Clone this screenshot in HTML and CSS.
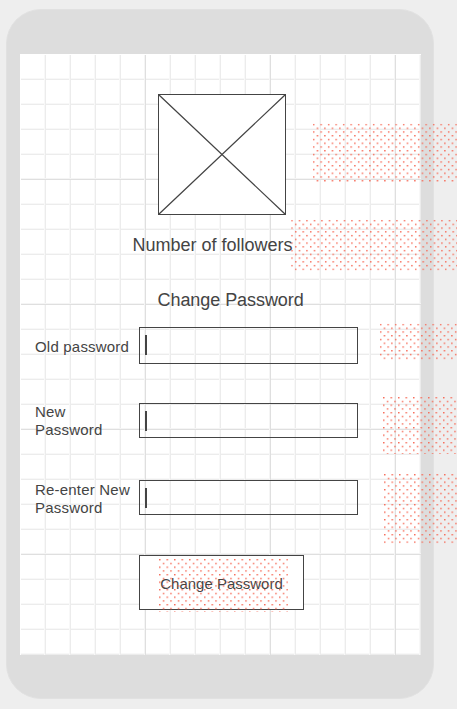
FILE: index.html
```html
<!DOCTYPE html>
<html lang="en">
<head>
<meta charset="utf-8">
<title>Change Password</title>
<link rel="stylesheet" href="styles.css">
</head>
<body>
<main class="device">
  <form class="screen">
    <svg class="picture" width="128" height="121" viewBox="0 0 128 121">
      <rect x=".5" y=".5" width="127" height="120"/>
      <path d="M.5 .5 127.5 120.5M127.5 .5 .5 120.5"/>
    </svg>
    <p class="followers">Number of followers</p>
    <h1 class="title">Change Password</h1>
    <div class="row row-old"><label>Old password</label><div class="field"><i class="caret"></i></div></div>
    <div class="row row-new"><label>New<br>Password</label><div class="field"><i class="caret"></i></div></div>
    <div class="row row-repeat"><label>Re-enter New<br>Password</label><div class="field"><i class="caret"></i></div></div>
    <button class="submit" type="button"><span>Change Password</span></button>
  </form>
</main>
<svg class="notes" width="457" height="709">
  <defs>
    <pattern id="d1" x="312.9" y="123.8" width="7.5" height="7.5" patternUnits="userSpaceOnUse"><path d="M0 0h1.5v1.5H0zM3.75 3.75h1.5v1.5h-1.5z"/></pattern>
    <pattern id="d2" href="#d1" x="291.2" y="219.9"/>
    <pattern id="d3" href="#d1" x="379.9" y="323.8"/>
    <pattern id="d4" href="#d1" x="383" y="397"/>
    <pattern id="d5" href="#d1" x="384" y="474"/>
    <pattern id="d6" href="#d1" x="159" y="559"/>
  </defs>
  <rect x="312.9" y="123.8" width="145" height="58.5" fill="url(#d1)"/>
  <rect x="291.2" y="219.9" width="166" height="50.5" fill="url(#d2)"/>
  <rect x="379.9" y="323.8" width="78" height="35.8" fill="url(#d3)"/>
  <rect x="383" y="397" width="75" height="57" fill="url(#d4)"/>
  <rect x="384" y="474" width="74" height="69.3" fill="url(#d5)"/>
  <rect x="159" y="559" width="129" height="53" fill="url(#d6)"/>
</svg>
</body>
</html>
```
FILE: styles.css
```css
* { box-sizing: border-box; }
body {
  margin: 0;
  height: 709px;
  overflow: hidden;
  background: #eee;
  color: #444;
  font-family: "Liberation Sans", Arial, sans-serif;
  display: flow-root;
}
.device {
  width: 428px;
  height: 690px;
  margin: 9px 0 0 6px;
  padding: 44px 13px 42px;
  border: 1px solid #e1e1e1;
  border-radius: 35px;
  background: #ddd;
}
.screen {
  width: 401px;
  height: 601px;
  padding: 40px 0 0 15px;
  display: flex;
  flex-direction: column;
  align-items: flex-start;
  background:
    linear-gradient(#fff, #fff) 0 0 / 1px 100% no-repeat,
    linear-gradient(#fff, #fff) 0 0 / 100% 1px no-repeat,
    linear-gradient(90deg, #dfdfdf 1px, transparent 1px 124px, #f5f5f5 124px) 0 0 / 125px 100%,
    linear-gradient(#dfdfdf 1px, transparent 1px 124px, #f5f5f5 124px) 0 0 / 100% 125px,
    linear-gradient(90deg, #ececec 1px, transparent 1px 24px, #f8f8f8 24px) 0 0 / 25px 100%,
    linear-gradient(#ececec 1px, transparent 1px 24px, #f8f8f8 24px) 0 0 / 100% 25px,
    #fff;
}
.picture { display: block; flex: none; margin-left: 123px; }
.picture rect { fill: #fff; stroke: #444; }
.picture path { fill: none; stroke: #444; stroke-width: 1.25; }
.followers, .title { font-size: 18px; font-weight: 400; line-height: 22px; white-space: nowrap; }
.followers { margin: 19px 0 0 97.5px; }
.title { margin: 33px 0 0 122.5px; letter-spacing: -.06px; }
.row { display: flex; align-items: flex-start; height: 35px; font-size: 15px; line-height: 18px; }
.row label { width: 104px; white-space: nowrap; letter-spacing: .2px; }
.field { width: 219px; height: 35px; padding: 7px 0 0 5px; border: 1px solid #444; }
.caret { display: block; width: 2px; height: 20px; background: #444; }
.row-old { height: 37px; margin-top: 16px; }
.row-old .field { height: 37px; }
.row-old label { padding-top: 11px; }
.row-new { margin-top: 39px; }
.row-repeat { margin-top: 42px; }
.row-repeat label { padding-top: 1px; }
.submit {
  width: 165px;
  height: 55px;
  margin: 40px 0 0 104px;
  padding: 2px 0 0;
  border: 1px solid #444;
  background: #fff;
  color: #444;
  font: 15px/18px "Liberation Sans", Arial, sans-serif;
}
.notes { position: absolute; inset: 0; pointer-events: none; }
.notes pattern path { fill: #f66c59; }
```
